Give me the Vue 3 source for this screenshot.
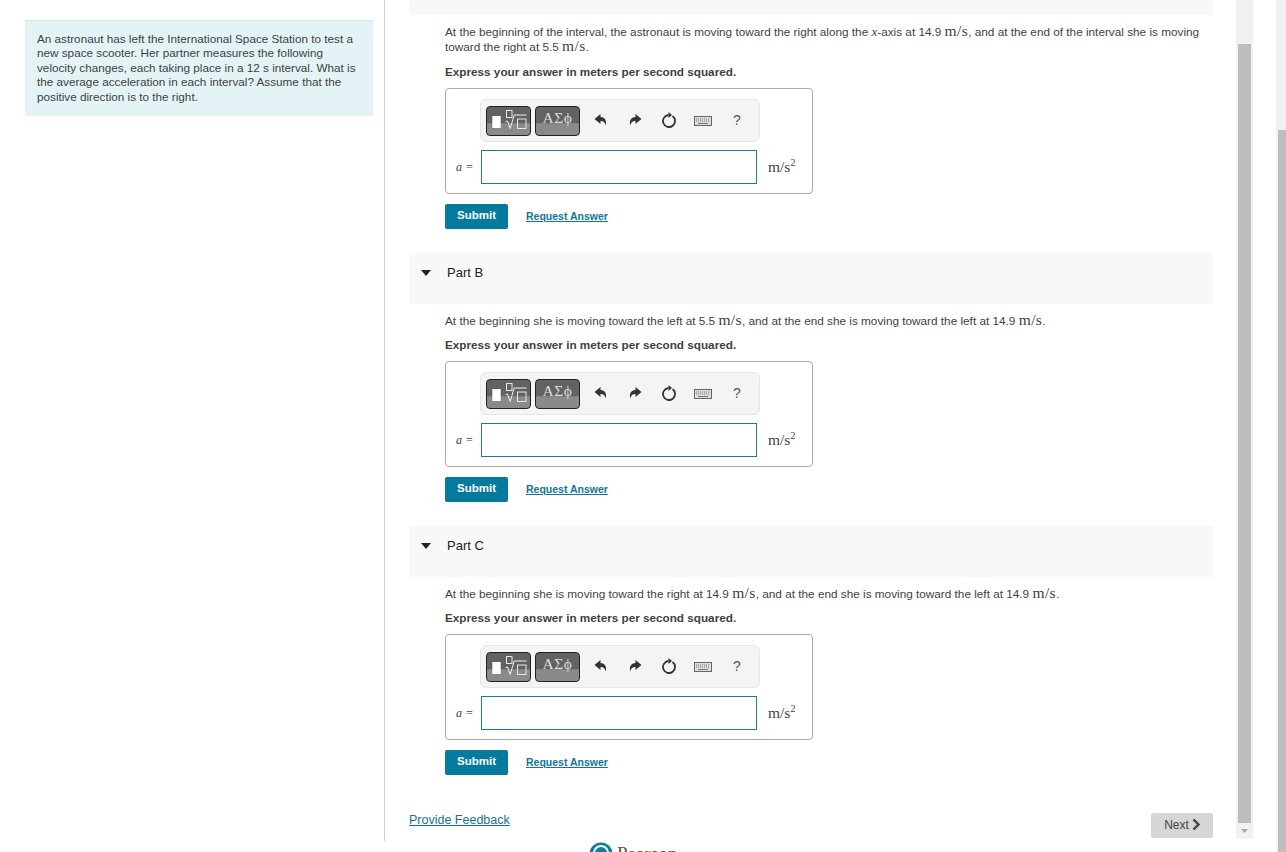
<script setup>
const partA = {
  title: null,
  text: [
    { t: 'At the beginning of the interval, the astronaut is moving toward the right along the ' },
    { v: 'x' },
    { t: '-axis at 14.9 ' },
    { m: 'm/s' },
    { t: ', and at the end of the interval she is moving toward the right at 5.5 ' },
    { m: 'm/s' },
    { t: '.' }
  ]
}
const partB = {
  title: 'Part B',
  text: [
    { t: 'At the beginning she is moving toward the left at 5.5 ' },
    { m: 'm/s' },
    { t: ', and at the end she is moving toward the left at 14.9 ' },
    { m: 'm/s' },
    { t: '.' }
  ]
}
const partC = {
  title: 'Part C',
  text: [
    { t: 'At the beginning she is moving toward the right at 14.9 ' },
    { m: 'm/s' },
    { t: ', and at the end she is moving toward the left at 14.9 ' },
    { m: 'm/s' },
    { t: '.' }
  ]
}
const parts = [partA, partB, partC]
</script>

<template>
  <div class="root">
    <div class="page">
      <div class="top">
        <aside class="aside">
          <div class="intro">
            An astronaut has left the International Space Station to test a new space scooter. Her partner measures the following velocity changes, each taking place in a 12 s interval. What is the average acceleration in each interval? Assume that the positive direction is to the right.
          </div>
        </aside>
        <main class="main">
          <section v-for="(part, i) in parts" :key="i" class="part">
            <header class="part-head" :class="{ stub: !part.title }">
              <template v-if="part.title">
                <svg class="caret" width="10" height="6" viewBox="0 0 10 6"><path d="M0 0h10L5 6z" fill="#222" /></svg>
                <span class="part-title">{{ part.title }}</span>
              </template>
            </header>
            <div class="part-body">
              <p class="prompt">
                <template v-for="(seg, j) in part.text" :key="j">
                  <span v-if="seg.m" class="unit">{{ seg.m }}</span>
                  <i v-else-if="seg.v" class="var">{{ seg.v }}</i>
                  <template v-else>{{ seg.t }}</template>
                </template>
              </p>
              <p class="express">Express your answer in meters per second squared.</p>
              <div class="editor">
                <div class="toolbar">
                  <div class="tool-btn">
                    <svg width="43" height="28" viewBox="0 0 43 28">
                      <rect x="5.300" y="9" width="8.400" height="12" fill="#fff" />
                      <rect x="19.500" y="3.500" width="5.500" height="7" fill="none" stroke="#e6e6e6" />
                      <path d="M18.500 14.500l2-.5 2.700 7.500 4-13.500H39.500" fill="none" stroke="#f0f0f0" />
                      <rect x="30.500" y="12" width="8.500" height="9.500" fill="none" stroke="#e6e6e6" />
                    </svg>
                  </div>
                  <div class="tool-btn greek">ΑΣϕ</div>
                  <svg class="tool-icon undo" width="14" height="14" viewBox="0 0 14 14"><path d="M6.500 1 0.500 6l6 5V8c2.700 0 4.300 1 5.200 4.600C13 8 11 4 6.500 4z" fill="#333" /></svg>
                  <svg class="tool-icon redo" width="14" height="14" viewBox="0 0 14 14"><path d="M7.500 1l6 5-6 5V8C4.800 8 3.200 9 2.300 12.600 1 8 3 4 7.500 4z" fill="#333" /></svg>
                  <svg class="tool-icon refresh" width="16" height="17" viewBox="0 0 16 17"><path d="M11.500 5.100A6 6 0 1 1 7.500 4.020" fill="none" stroke="#333" stroke-width="1.800" /><path d="M7.500 1v6l3.500-3z" fill="#333" /></svg>
                  <svg class="tool-icon keys" width="18" height="10" viewBox="0 0 18 10">
                    <rect x="0.500" y="0.500" width="17" height="9" fill="#ddd" stroke="#666" />
                    <path d="M2 3h14M2 5h14" stroke="#777" stroke-dasharray="1 1" />
                    <path d="M4 7.500h10" stroke="#777" />
                  </svg>
                  <span class="help">?</span>
                </div>
                <div class="answer-row">
                  <span class="answer-label"><i>a</i> =</span>
                  <input class="answer" type="text" />
                  <span class="answer-unit">m/s<sup>2</sup></span>
                </div>
              </div>
              <div class="actions">
                <button class="submit" type="button">Submit</button>
                <a class="request" href="#">Request Answer</a>
              </div>
            </div>
          </section>
          <div class="feedback-row">
            <a class="feedback" href="#">Provide Feedback</a>
            <button class="next" type="button">Next
              <svg width="8" height="11" viewBox="0 0 8 11"><path d="M1.500 0.500 6.500 5.500 1.500 10.500" fill="none" stroke="#444" stroke-width="2.400" /></svg>
            </button>
          </div>
        </main>
        <div class="inner-scroll">
          <div class="inner-thumb"></div>
          <svg class="down" width="7" height="4" viewBox="0 0 7 4"><path d="M0 0h7L3.500 4z" fill="#a8a8a8" /></svg>
        </div>
      </div>
      <footer class="brand">
        <svg width="24" height="24" viewBox="0 0 24 24">
          <circle cx="12" cy="12" r="11.500" fill="#0d7f9c" />
          <path d="M5 11a7 7 0 0 1 14 0" fill="none" stroke="#fff" stroke-width="2" />
        </svg>
        <span class="brand-name">Pearson</span>
      </footer>
    </div>
    <div class="outer-scroll"><div class="outer-thumb"></div></div>
  </div>
</template>

<style>
html, body { margin: 0; background: #fff; overflow: hidden; }
</style>

<style scoped>
.root {
  display: flex;
  width: 1286px;
  height: 852px;
  overflow: hidden;
  background: #fff;
  color: #3f3f3f;
  font-family: "Liberation Sans", Arial, sans-serif;
  font-size: 11.720px;
}
.page { width: 1276px; height: 852px; overflow: hidden; }
.top { display: flex; height: 841px; overflow: hidden; }
.aside {
  box-sizing: border-box;
  flex: none;
  width: 385px;
  padding: 20px 0 0 25px;
  border-right: 1px solid #c6d5df;
}
.intro {
  box-sizing: border-box;
  width: 348px;
  padding: 11px 12px 12px;
  background: #e4f4f6;
  border-top: 1px solid #d4e4e8;
  line-height: 14.400px;
}
.main { box-sizing: border-box; flex: none; width: 851px; padding: 0 23px 0 24px; }
.part + .part { margin-top: 24px; }
.part-head {
  display: flex;
  align-items: flex-start;
  height: 51px;
  padding: 12px 0 0 12px;
  box-sizing: border-box;
  background: #f8f8f8;
  color: #222;
}
.part-head.stub { height: 15px; padding: 0; }
.caret { margin: 5px 16px 0 0; }
.part-title { font-size: 13px; line-height: 15px; }
.part-body { padding-left: 36px; }
.prompt { margin: 9px 0 0; width: 760px; font-size: 11.770px; line-height: 15px; }
.unit { font-family: "Liberation Serif", serif; font-size: 15.500px; line-height: 0; letter-spacing: 0.400px; }
.var { font-family: "Liberation Serif", serif; font-size: 13px; line-height: 0; }
.express { margin: 9px 0 0; line-height: 15px; font-weight: 700; }
.part:first-child .express { margin-top: 10px; }
.editor {
  box-sizing: border-box;
  width: 368px;
  height: 106px;
  margin-top: 9px;
  padding: 10px 0 0 34px;
  border: 1px solid #aaa;
  border-radius: 4px;
}
.toolbar {
  box-sizing: border-box;
  display: flex;
  align-items: center;
  width: 280px;
  height: 43px;
  padding-left: 5px;
  background: #f4f4f4;
  border: 1px solid #e6e6e6;
  border-radius: 6px;
}
.tool-btn {
  box-sizing: border-box;
  display: flex;
  align-items: center;
  justify-content: center;
  width: 45px;
  height: 30px;
  margin-right: 4px;
  border: 1px solid #222;
  border-radius: 4px;
  background: linear-gradient(#626262 0, #626262 56%, #8a8a8a 60%, #8a8a8a 100%);
}
.tool-btn.greek {
  align-items: flex-start;
  padding-top: 2px;
  color: #ddd;
  font-family: "Liberation Serif", serif;
  font-size: 15.500px;
  line-height: 18px;
  letter-spacing: 0.500px;
}
.tool-icon { flex: none; }
.undo { margin: 0 0 2px 10px; }
.redo { margin: 0 0 2px 20px; }
.refresh { margin: 0 0 2px 19px; }
.keys { margin-left: 17px; }
.help { margin: 0 0 2px 21px; font-size: 14px; color: #555; }
.answer-row { display: flex; align-items: center; margin-top: 8px; }
.answer-label {
  flex: none;
  width: 25px;
  margin-left: -24px;
  box-sizing: border-box;
  font-family: "Liberation Serif", serif;
  font-size: 12px;
  color: #444;
  letter-spacing: 0.500px;
}
.answer {
  box-sizing: border-box;
  flex: none;
  width: 276px;
  height: 34px;
  padding: 0;
  border: 1px solid #1d7c94;
  outline: none;
  background: #fff;
}
.answer-unit {
  margin-left: 11px;
  font-family: "Liberation Serif", serif;
  font-size: 15.500px;
  color: #444;
}
.answer-unit sup { font-size: 10px; line-height: 0; }
.actions { display: flex; align-items: center; margin-top: 10px; }
.submit {
  width: 63px;
  height: 25px;
  padding: 0 0 2px;
  border: 0;
  border-radius: 2px;
  background: #047a9c;
  color: #fff;
  font: 700 11.500px/15px "Liberation Sans", Arial, sans-serif;
}
.request {
  margin: 0 0 2px 18px;
  color: #12769a;
  font-size: 10.500px;
  font-weight: 700;
  text-decoration: underline;
}
.feedback-row {
  display: flex;
  justify-content: space-between;
  align-items: flex-start;
  margin-top: 38px;
}
.feedback { margin-top: 1px; color: #1a6f96; font-size: 12.500px; line-height: 13px; text-decoration: underline; }
.next {
  display: flex;
  align-items: center;
  justify-content: center;
  gap: 3px;
  width: 62px;
  height: 25px;
  padding: 0 0 2px;
  border: 0;
  border-radius: 2px;
  background: #d6d6d6;
  color: #444;
  font: 12px "Liberation Sans", Arial, sans-serif;
}
.inner-scroll {
  box-sizing: border-box;
  flex: none;
  display: flex;
  flex-direction: column;
  align-items: center;
  width: 17px;
  height: 839px;
  padding-top: 44px;
  background: #f1f1f1;
}
.inner-thumb { width: 13px; height: 779px; background: #bdbdbd; }
.down { margin-top: 6px; }
.brand { display: flex; align-items: flex-start; gap: 4px; padding: 1px 0 0 589px; }
.brand-name {
  margin-top: 3px;
  font-family: "Liberation Serif", serif;
  font-size: 19px;
  line-height: 18px;
  color: #555;
}
.outer-scroll {
  box-sizing: border-box;
  flex: none;
  width: 10px;
  height: 852px;
  padding: 130px 0 0 2px;
  background: #f1f1f1;
}
.outer-thumb { width: 8px; height: 722px; background: #bdbdbd; }
</style>
